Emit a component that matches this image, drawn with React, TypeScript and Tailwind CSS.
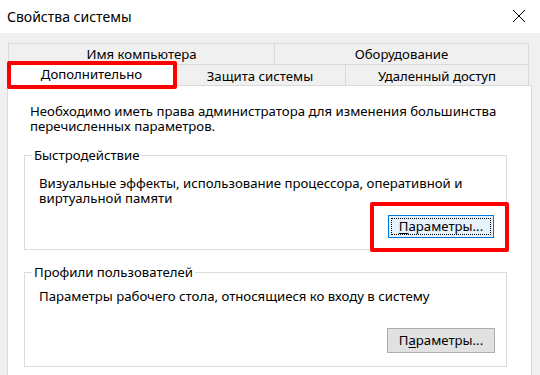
const font = "font-['Noto_Sans','Liberation_Sans',sans-serif]";

function Tab({ label, className }: { label: string; className?: string }) {
  return (
    <div
      className={
        "flex items-center justify-center border border-[#d9d9d9] bg-[#f0f0f0] text-[13.2px] leading-none " +
        (className ?? "")
      }
    >
      {label}
    </div>
  );
}

function GroupBox({ title, children }: { title: string; children: React.ReactNode }) {
  return (
    <fieldset className="ml-[16px] w-[483px] border border-[#dcdcdc] px-0">
      <legend className="ml-[7px] px-[2px] text-[13.2px] leading-[15px]">{title}</legend>
      {children}
    </fieldset>
  );
}

export default function App() {
  return (
    <div className={"relative w-[540px] h-[375px] overflow-hidden bg-[#f0f0f0] text-black " + font}>
      {/* title bar */}
      <div className="flex h-[33px] items-center justify-between bg-white pl-[7px] pr-[14px]">
        <span className="text-[14px] leading-none">Свойства системы</span>
        <svg width="14" height="14" viewBox="0 0 14 14" className="mt-[-1px]">
          <path d="M1 1L13 13M13 1L1 13" stroke="#000" strokeWidth="1" fill="none" />
        </svg>
      </div>

      <div className="pt-[10px] pl-[8px]">
        {/* tabs */}
        <div className="grid h-[22px] w-[521px] grid-cols-[267px_254px]">
          <Tab label="Имя компьютера" className="pt-[1px]" />
          <Tab label="Оборудование" className="border-l-0 pt-[1px]" />
        </div>
        <div className="-mt-px flex h-[22px] w-[521px] items-end">
          <div className="relative z-10 -mb-[1px] flex h-[25px] w-[167px] items-center justify-center border border-b-0 border-[#d9d9d9] bg-white text-[13.2px] leading-none">
            Дополнительно
          </div>
          <Tab label="Защита системы" className="h-[22px] w-[171px] border-l-0 pt-[3px]" />
          <Tab label="Удаленный доступ" className="h-[22px] w-[183px] border-l-0 pt-[3px]" />
        </div>

        {/* panel */}
        <div className="-mt-px -ml-px h-[300px] w-[525px] border border-[#d9d9d9] bg-white pt-[18px]">
          <p className="pl-[22px] text-[13.2px] leading-[15px]">
            Необходимо иметь права администратора для изменения большинства
            <br />
            перечисленных параметров.
          </p>

          <div className="mt-[14px]">
            <GroupBox title="Быстродействие">
              <p className="pt-[13px] pl-[14px] text-[13.2px] leading-[15px]">
                Визуальные эффекты, использование процессора, оперативной и
                <br />
                виртуальной памяти
              </p>
              <div className="mt-[9px] flex justify-end pr-[12px] pb-[11px]">
                <button className="flex h-[23px] w-[106px] items-center justify-center border border-[#0078d7] bg-[#e5f1fb] p-[2px] text-[13.2px]">
                  <span className="flex h-full w-full items-center justify-center border border-dotted border-black leading-none">
                    <span className="underline underline-offset-2">П</span>араметры...
                  </span>
                </button>
              </div>
            </GroupBox>
          </div>

          <div className="mt-[15px]">
            <GroupBox title="Профили пользователей">
              <p className="pt-[9px] pl-[14px] text-[13.2px] leading-[15px]">
                Параметры рабочего стола, относящиеся ко входу в систему
              </p>
              <div className="mt-[24px] flex justify-end pr-[11px] pb-[13px]">
                <button className="flex h-[25px] w-[108px] items-center justify-center border border-[#adadad] bg-[#e1e1e1] text-[13.2px] leading-none">
                  П<span className="underline underline-offset-2">а</span>раметры...
                </button>
              </div>
            </GroupBox>
          </div>
        </div>
      </div>

      {/* red highlight annotations */}
      <div className="absolute left-[7px] top-[61px] z-20 h-[28px] w-[170px] rounded-[2px] border-[4px] border-[#ff0000]" />
      <div className="absolute left-[370px] top-[202px] z-20 h-[50px] w-[139px] rounded-[2px] border-[4px] border-[#ff0000]" />
    </div>
  );
}
